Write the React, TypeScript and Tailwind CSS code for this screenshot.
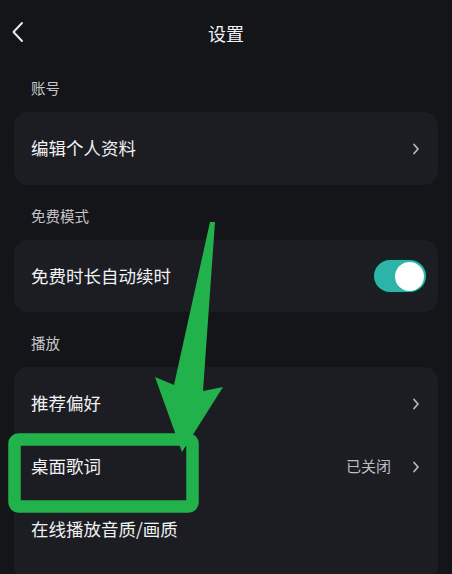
import React from "react";

const font = { fontFamily: '"Noto Sans CJK SC", "Noto Sans", sans-serif' };

function Chevron() {
  return (
    <svg width="8" height="12" viewBox="0 0 8 12" className="shrink-0">
      <path d="M2 1.5 L6 6 L2 10.5" fill="none" stroke="#b4b5b8" strokeWidth="1.8" strokeLinecap="round" strokeLinejoin="round" />
    </svg>
  );
}

function Label({ children, first }: { children: React.ReactNode; first?: boolean }) {
  return (
    <div className={`${first ? "mt-[12px]" : "mt-[21px]"} mb-[14px] px-[31px] h-[20px] flex items-center text-[14.5px] text-[#c4c5c8]`}>
      {children}
    </div>
  );
}

function Row({ title, value, right }: { title: string; value?: string; right?: React.ReactNode }) {
  return (
    <div className="h-[63px] flex items-center pl-[17px] pr-[18px]">
      <span className="flex-1 text-[17.5px] text-[#f1f1f3]">{title}</span>
      {value && <span className="text-[15px] text-[#bdbec2] mr-[21px]">{value}</span>}
      {right ?? <Chevron />}
    </div>
  );
}

export default function App() {
  return (
    <div className="relative w-[452px] h-[574px] overflow-hidden bg-[#141519]" style={font}>
      <div className="h-[66px] relative flex items-center justify-center">
        <svg className="absolute left-[10px] top-[21px]" width="16" height="22" viewBox="0 0 16 22">
          <path d="M12 2 L3.5 11 L12 20" fill="none" stroke="#e8e8ea" strokeWidth="2" strokeLinecap="round" strokeLinejoin="round" />
        </svg>
        <span className="text-[18px] text-[#f2f2f4]">设置</span>
      </div>

      <Label first>账号</Label>
      <div className="mx-[14px] rounded-[14px] bg-[#1c1d22] h-[73px] flex flex-col justify-center">
        <Row title="编辑个人资料" />
      </div>

      <Label>免费模式</Label>
      <div className="mx-[14px] rounded-[14px] bg-[#1c1d22] h-[72px] flex flex-col justify-center">
        <Row
          title="免费时长自动续时"
          right={
            <div className="w-[52px] h-[32px] rounded-full bg-[#2db4a8] ring-2 ring-[#0d2624] flex items-center justify-end pr-[2px] mr-[-6px]">
              <div className="w-[29px] h-[29px] rounded-full bg-white" />
            </div>
          }
        />
      </div>

      <Label>播放</Label>
      <div className="mx-[14px] rounded-[14px] bg-[#1c1d22] pt-[5px] pb-[20px]">
        <Row title="推荐偏好" />
        <Row title="桌面歌词" value="已关闭" />
        <Row title="在线播放音质/画质" right={<span />} />
      </div>

      <svg className="absolute inset-0 pointer-events-none" width="452" height="574" viewBox="0 0 452 574">
        <rect x="14.5" y="439.5" width="178" height="67" rx="4" fill="none" stroke="#22b24c" strokeWidth="12.5" />
        <polygon points="210,222 215,222 203,391 223,387 182,452 155,377 174,385" fill="#22b24c" />
      </svg>
    </div>
  );
}
